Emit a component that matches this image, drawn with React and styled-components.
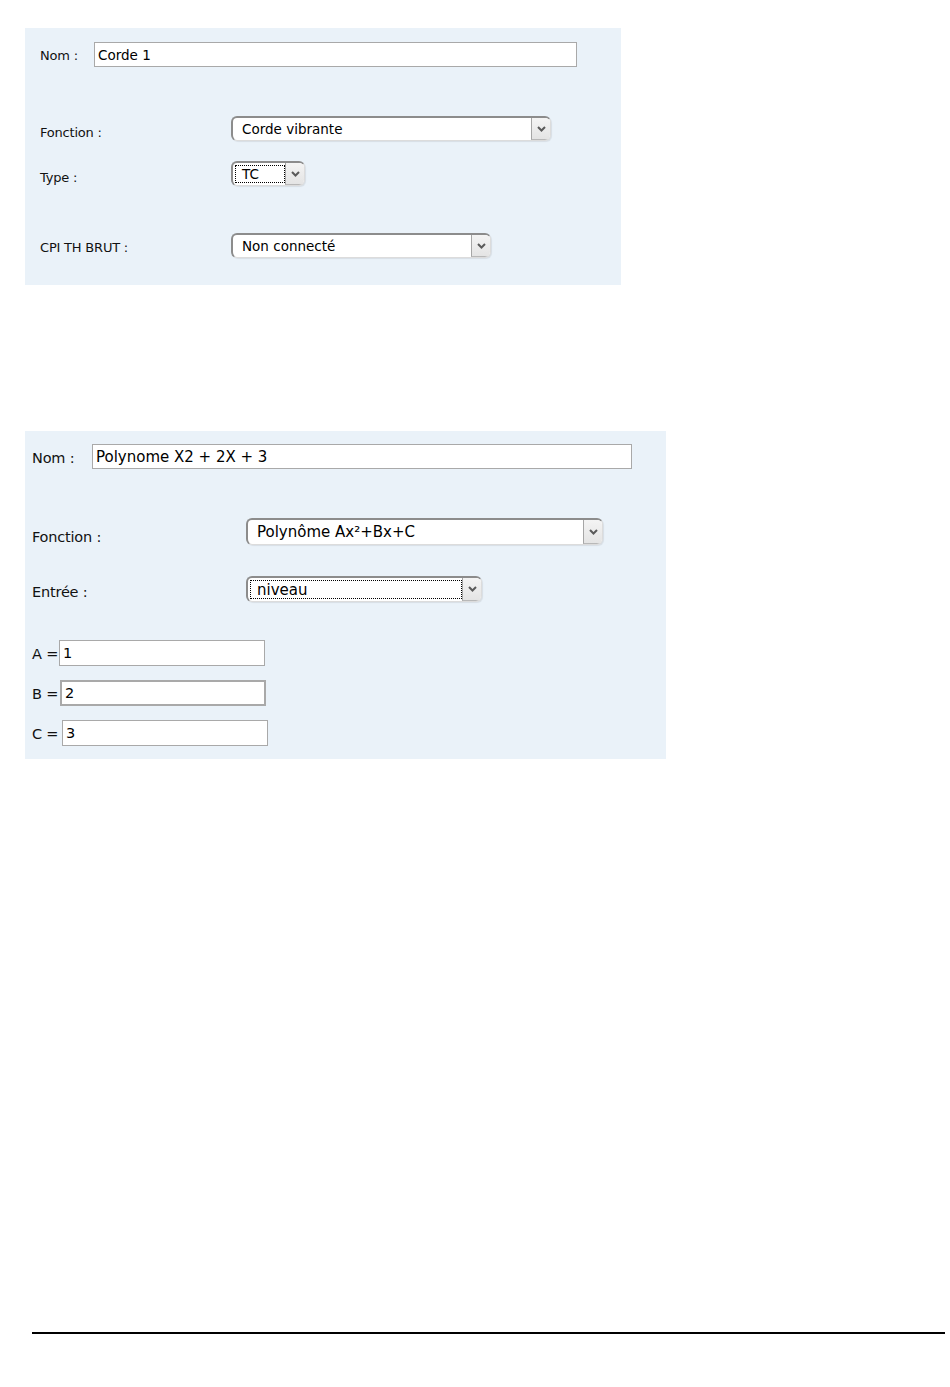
import React from 'react'
import { styled, createGlobalStyle } from 'styled-components'

const GlobalStyle = createGlobalStyle`
  html, body {
    margin: 0;
    padding: 0;
    background: #ffffff;
  }
  body {
    font-family: "DejaVu Sans", "Liberation Sans", sans-serif;
    color: #000;
  }
`;

function Chevron() {
  return (
    <svg width="9" height="6" viewBox="0 0 9 6">
      <path d="M1 1 L4.5 4.5 L8 1" fill="none" stroke="#5a5a5a" strokeWidth="2" />
    </svg>
  )
}

function Select({ value, width, height, focused, size }) {
  return (
    <SelectBox $width={width} $height={height}>
      <SelectValue $focused={focused} $size={size}>{value}</SelectValue>
      <SelectButton><Chevron /></SelectButton>
    </SelectBox>
  )
}

function App() {
  return (
    <Page>
      <GlobalStyle />
      <Panel $width={596} $height={257} $pad="14px 0 0 15px">
        <Row $size={13}>
          <Label $width={54}>Nom :</Label>
          <TextBox $width={483} $size={13.5}>Corde 1</TextBox>
        </Row>
        <Row $size={13} $top={49}>
          <Label $width={191} $drop={5}>Fonction :</Label>
          <Select value="Corde vibrante" width={320} height={25} size={13.5} />
        </Row>
        <Row $size={13} $top={20}>
          <Label $width={191} $drop={6}>Type :</Label>
          <Select value="TC" width={74} height={25} size={13.5} focused />
        </Row>
        <Row $size={13} $top={47}>
          <Label $width={191} $drop={2}>CPI TH BRUT :</Label>
          <Select value="Non connecté" width={260} height={25} size={13.5} />
        </Row>
      </Panel>

      <Panel $width={641} $height={328} $pad="13px 0 0 7px" $top={146}>
        <Row $size={14.5}>
          <Label $width={60}>Nom :</Label>
          <TextBox $width={540} $size={15}>Polynome X2 + 2X + 3</TextBox>
        </Row>
        <Row $size={14.5} $top={49}>
          <Label $width={214} $drop={9}>Fonction :</Label>
          <Select value="Polynôme Ax²+Bx+C" width={357} height={27} size={15} />
        </Row>
        <Row $size={14.5} $top={31}>
          <Label $width={214} $drop={3}>Entrée :</Label>
          <Select value="niveau" width={236} height={26} size={15} focused />
        </Row>
        <Coefs>
          <Row $size={14.5}>
            <Label $width={27}>A =</Label>
            <CoefBox>1</CoefBox>
          </Row>
          <Row $size={14.5}>
            <Label $width={28}>B =</Label>
            <CoefBox $thick>2</CoefBox>
          </Row>
          <Row $size={14.5}>
            <Label $width={30}>C =</Label>
            <CoefBox>3</CoefBox>
          </Row>
        </Coefs>
      </Panel>

      <Rule />
    </Page>
  )
}

const Page = styled.div`
  padding: 28px 0 0 25px;
  height: 1387px;
  box-sizing: border-box;
  display: flex;
  flex-direction: column;
  align-items: flex-start;
`;

const Panel = styled.div`
  width: ${p => p.$width}px;
  height: ${p => p.$height}px;
  margin-top: ${p => p.$top || 0}px;
  padding: ${p => p.$pad};
  box-sizing: border-box;
  background: #eaf2f9;
  display: flex;
  flex-direction: column;
`;

const Row = styled.div`
  display: flex;
  align-items: center;
  margin-top: ${p => p.$top || 0}px;
  font-size: ${p => p.$size}px;
`;

const Label = styled.span`
  width: ${p => (p.$width ? `${p.$width}px` : 'auto')};
  flex-shrink: 0;
  white-space: nowrap;
  color: #111;
  margin-top: ${p => 2 + (p.$drop || 0)}px;
  letter-spacing: -0.2px;
`;

const TextBox = styled.div`
  width: ${p => p.$width}px;
  height: 25px;
  box-sizing: border-box;
  border: 1px solid #a9a9a9;
  background: #fff;
  font-size: ${p => p.$size}px;
  display: flex;
  align-items: center;
  padding-left: 3px;
`;

const SelectBox = styled.div`
  width: ${p => p.$width}px;
  height: ${p => p.$height}px;
  box-sizing: border-box;
  display: flex;
  background: #fff;
  border-top: 2px solid #8c8c8c;
  border-left: 2px solid #8c8c8c;
  border-right: 1px solid #dcdcdc;
  border-bottom: 1px solid #dcdcdc;
  border-radius: 6px;
  box-shadow: 1px 1px 1px rgba(0, 0, 0, 0.08);
  overflow: hidden;
`;

const SelectValue = styled.div`
  flex: 1;
  display: flex;
  align-items: center;
  padding-left: 7px;
  margin: 2px 0 2px 2px;
  font-size: ${p => p.$size}px;
  outline: ${p => (p.$focused ? '1px dotted #000' : 'none')};
  outline-offset: -1px;
`;

const SelectButton = styled.div`
  width: 18px;
  flex-shrink: 0;
  background: linear-gradient(#f4f4f4, #e4e4e4);
  border-left: 1px solid #a6a6a6;
  border-bottom: 1px solid #b8b8b8;
  display: flex;
  align-items: center;
  justify-content: center;
`;

const Coefs = styled.div`
  margin-top: 38px;
  display: flex;
  flex-direction: column;
  gap: 14px;
`;

const CoefBox = styled.div`
  width: 206px;
  height: 26px;
  box-sizing: border-box;
  border: ${p => (p.$thick ? '2px' : '1px')} solid #a9a9a9;
  background: #fff;
  display: flex;
  align-items: center;
  padding-left: 3px;
`;

const Rule = styled.hr`
  margin: auto 0 53px 7px;
  width: 913px;
  height: 2px;
  border: none;
  background: #000;
`;

export default App
